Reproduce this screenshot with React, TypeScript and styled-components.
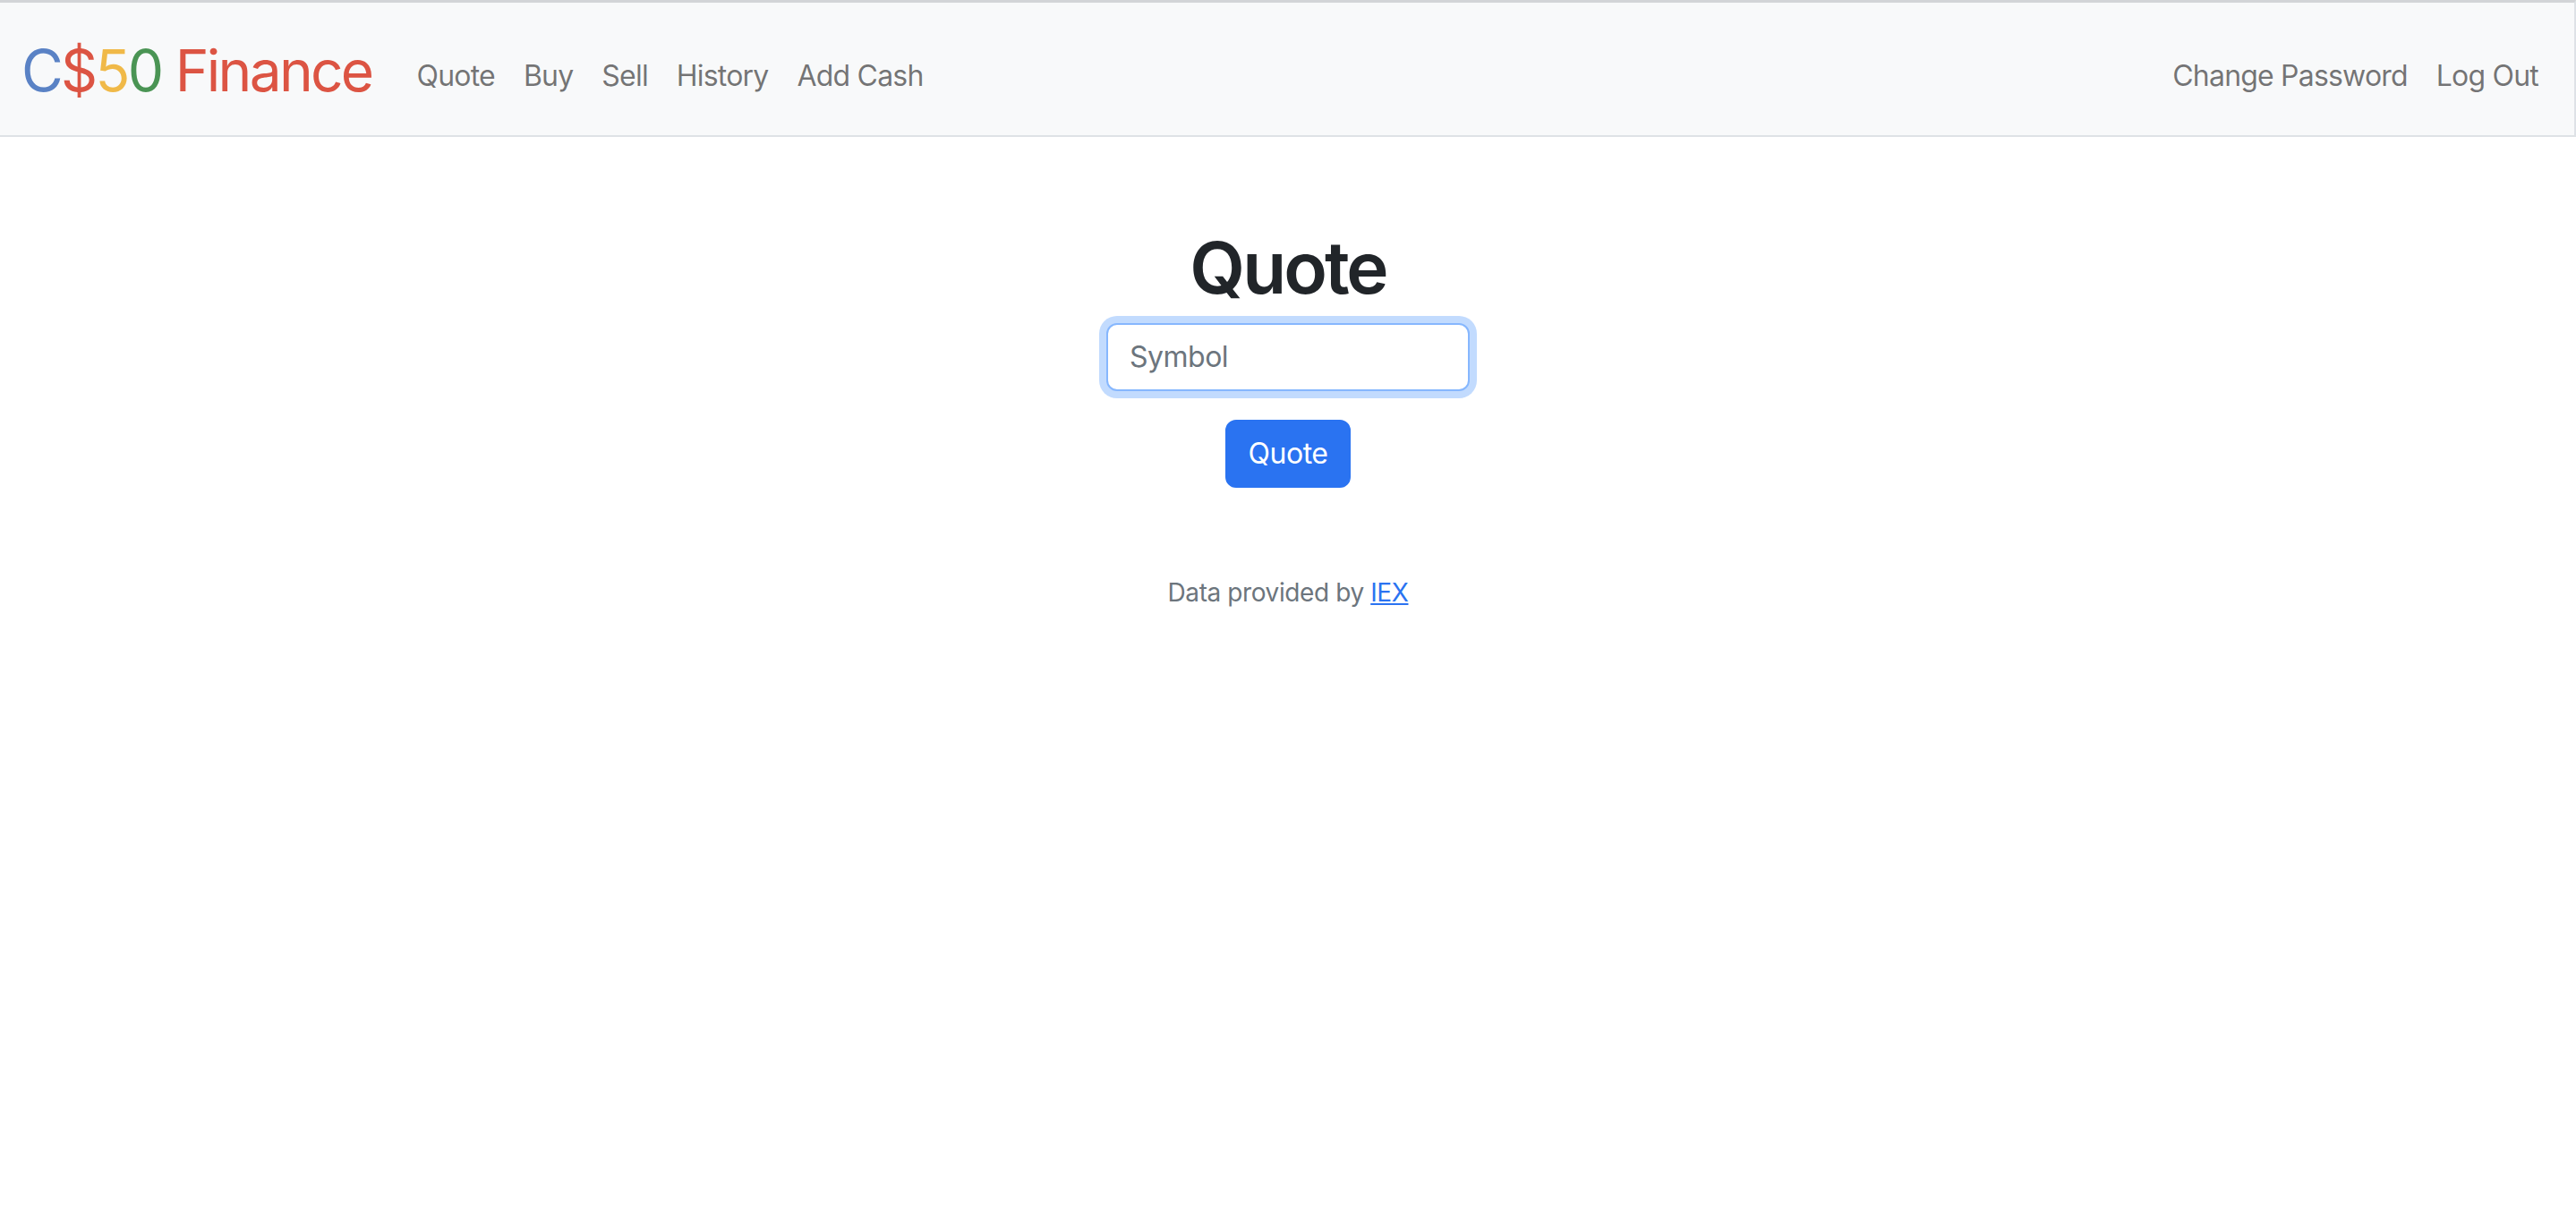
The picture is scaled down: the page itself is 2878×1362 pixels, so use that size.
import React from "react";
import styled, { createGlobalStyle } from "styled-components";

const GlobalStyle = createGlobalStyle`
  html, body {
    margin: 0;
    padding: 0;
    background: #ffffff;
  }
  body {
    font-family: Inter, "Noto Sans", "Liberation Sans", sans-serif;
    color: #212529;
    font-size: 32px;
    line-height: 1.5;
  }
  * { box-sizing: border-box; }
`;

const Navbar = styled.nav`
  display: flex;
  align-items: center;
  justify-content: space-between;
  background: #f8f9fa;
  border-top: 3px solid #d2d4d7;
  border-right: 2px solid #dee2e6;
  border-bottom: 2px solid #dee2e6;
  padding: 16px 24px;
`;

const LeftGroup = styled.div`
  display: flex;
  align-items: center;
`;

const Brand = styled.a`
  font-size: 64px;
  line-height: 1.5;
  letter-spacing: -2.7px;
  padding: 12px 0 8px;
  margin-right: 34px;
  text-decoration: none;
  white-space: nowrap;
`;

const Tint = styled.span<{ $c: string }>`
  color: ${(p) => p.$c};
`;

const NavList = styled.ul`
  display: flex;
  list-style: none;
  margin: 16px 0 0;
  padding: 0;
`;

const NavLink = styled.a`
  display: block;
  padding: 16px 16px;
  font-size: 32px;
  line-height: 1.5;
  letter-spacing: -0.8px;
  color: rgba(0, 0, 0, 0.55);
  text-decoration: none;
  white-space: nowrap;
`;

const Main = styled.main`
  padding: 98px 24px 96px;
  display: flex;
  flex-direction: column;
  align-items: center;
  text-align: center;
`;

const Heading = styled.h1`
  font-size: 80px;
  font-weight: 600;
  line-height: 1.2;
  letter-spacing: -3px;
  margin: 0 0 14px;
  color: #212529;
`;

const Form = styled.form`
  display: flex;
  flex-direction: column;
  align-items: center;
`;

const SymbolInput = styled.input`
  width: 406px;
  font-family: inherit;
  font-size: 32px;
  line-height: 1.5;
  letter-spacing: -0.5px;
  padding: 12px 24px;
  margin-bottom: 32px;
  color: #212529;
  background: #fff;
  border: 2px solid #86b7fe;
  border-radius: 12px;
  box-shadow: 0 0 0 8px rgba(13, 110, 253, 0.25);
  outline: none;
  &::placeholder {
    color: #6c757d;
    opacity: 1;
  }
`;

const PrimaryButton = styled.button`
  font-family: inherit;
  font-size: 32px;
  line-height: 1.5;
  letter-spacing: -0.5px;
  padding: 12px 24px;
  color: #fff;
  background: #2a73f1;
  border: 2px solid #2a73f1;
  border-radius: 12px;
  cursor: pointer;
`;

const Footer = styled.footer`
  text-align: center;
  font-size: 28px;
  line-height: 1.5;
  letter-spacing: -0.4px;
  color: #6c757d;
  margin-bottom: 96px;
`;

const FooterLink = styled.a`
  color: #2a73f1;
  text-decoration: underline;
`;

export default function App() {
  return (
    <>
      <GlobalStyle />
      <Navbar>
        <LeftGroup>
          <Brand href="#">
            <Tint $c="#5a82c5">C</Tint>
            <Tint $c="#dc5443">$</Tint>
            <Tint $c="#f0b948">5</Tint>
            <Tint $c="#4a9454">0</Tint> <Tint $c="#dc5443">Finance</Tint>
          </Brand>
          <NavList>
            {["Quote", "Buy", "Sell", "History", "Add Cash"].map((t) => (
              <li key={t}>
                <NavLink href="#">{t}</NavLink>
              </li>
            ))}
          </NavList>
        </LeftGroup>
        <NavList>
          {["Change Password", "Log Out"].map((t) => (
            <li key={t}>
              <NavLink href="#">{t}</NavLink>
            </li>
          ))}
        </NavList>
      </Navbar>
      <Main>
        <Heading>Quote</Heading>
        <Form onSubmit={(e) => e.preventDefault()}>
          <SymbolInput type="text" placeholder="Symbol" autoComplete="off" />
          <PrimaryButton type="submit">Quote</PrimaryButton>
        </Form>
      </Main>
      <Footer>
        Data provided by <FooterLink href="#">IEX</FooterLink>
      </Footer>
    </>
  );
}
